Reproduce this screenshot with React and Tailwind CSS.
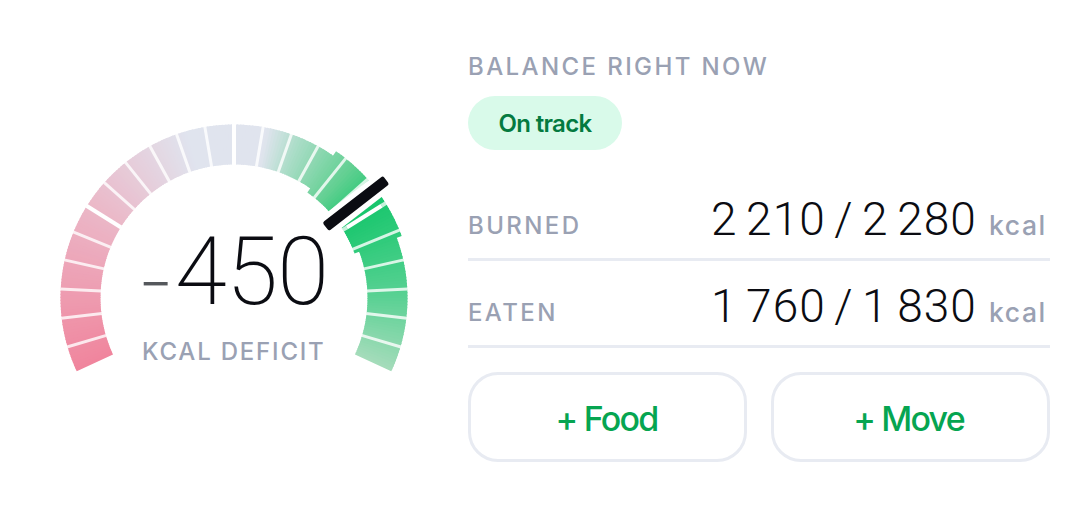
const C = 174;
const pt = (r, deg) => {
  const a = (deg * Math.PI) / 180;
  return [C + r * Math.sin(a), C - r * Math.cos(a)];
};
const band = (r0, r1, a0, a1) => {
  const [x0, y0] = pt(r1, a0);
  const [x1, y1] = pt(r1, a1);
  const [x2, y2] = pt(r0, a1);
  const [x3, y3] = pt(r0, a0);
  const l = a1 - a0 > 180 ? 1 : 0;
  return `M${x0} ${y0}A${r1} ${r1} 0 ${l} 1 ${x1} ${y1}L${x2} ${y2}A${r0} ${r0} 0 ${l} 0 ${x3} ${y3}Z`;
};
const STOPS = [
  [-115, [240, 133, 157]],
  [-57, [235, 184, 200]],
  [-16, [224, 228, 238]],
  [11, [224, 228, 238]],
  [22, [172, 221, 200]],
  [42, [98, 208, 146]],
  [56, [25, 198, 109]],
  [66, [43, 202, 120]],
  [90, [90, 209, 148]],
  [115, [166, 220, 187]],
];
const colorAt = (a) => {
  let i = 0;
  while (i < STOPS.length - 2 && a > STOPS[i + 1][0]) i++;
  const [a0, c0] = STOPS[i];
  const [a1, c1] = STOPS[i + 1];
  const t = Math.min(1, Math.max(0, (a - a0) / (a1 - a0)));
  return `rgb(${c0.map((v, k) => Math.round(v + (c1[k] - v) * t)).join(",")})`;
};
const slices = (r0, r1, from, to) => {
  const n = Math.round(to - from);
  const step = (to - from) / n;
  return Array.from({ length: n }, (_, i) => {
    const a = from + i * step;
    return <path key={a} d={band(r0, r1, a, Math.min(to, a + step + 0.4))} fill={colorAt(a + step / 2)} />;
  });
};

function Tick({ angle, from, to, opacity, width }) {
  const [x1, y1] = pt(from, angle);
  const [x2, y2] = pt(to, angle);
  return <line x1={x1} y1={y1} x2={x2} y2={y2} stroke="#fff" strokeOpacity={opacity} strokeWidth={width} />;
}

function Gauge() {
  return (
    <svg className="block h-[348px] w-[348px] overflow-visible" viewBox="0 0 348 348">
      {slices(133.5, 173.5, -115, 115)}
      {slices(128.5, 178.8, 34.8, 69.7)}
      {Array.from({ length: 23 }, (_, i) => {
        const a = (i - 11) * 9.667;
        const major = (i + 1) % 6 === 0;
        const zone = a > 34.8 && a < 69.7;
        return (
          <g key={i}>
            <Tick angle={a} from={zone && !major ? 128 : 133} to={zone && !major ? 179.5 : 174} opacity={major ? 1 : 0.8} width={major ? 4 : 3} />
            {zone && major && <Tick angle={a} from={128} to={133} opacity={0.75} width={4} />}
            {zone && major && <Tick angle={a} from={174} to={179.5} opacity={0.75} width={4} />}
          </g>
        );
      })}
      <g transform={`rotate(52.2 ${C} ${C})`}>
        <rect x={C - 10.6} y={C - 197} width="21.2" height="85" fill="#fff" />
        <rect x={C - 5.3} y={C - 192.5} width="10.6" height="76.5" rx="2.2" fill="#0b0c12" />
      </g>
    </svg>
  );
}

const label = "text-[#9aa1b3] text-[24px] leading-[30px] whitespace-nowrap";

function Row({ name, value }) {
  return (
    <div className="flex h-[87px] items-end justify-between border-b-[3px] border-[#e8ebf2] pb-[15px]">
      <span className={`${label} mb-[2px] font-[450] tracking-[2.4px]`}>{name}</span>
      <span className="flex items-baseline">
        <span className="pr-[12px] font-['Roboto',sans-serif] text-[46px] leading-[48px] font-light tracking-[1.1px] whitespace-nowrap text-[#0b0c12] [word-spacing:-3.9px]">{value}</span>
        <span className="w-[61px] text-[26.5px] leading-[30px] font-medium tracking-[1.6px] text-[#9aa1b3]">kcal</span>
      </span>
    </div>
  );
}

export default function App() {
  return (
    <div className="flex h-[510px] w-[1092px] overflow-hidden bg-white font-['Inter',sans-serif]">
      <div className="grid w-[468px] pt-[123.5px] pl-[60px]">
        <div className="col-start-1 row-start-1">
          <Gauge />
        </div>
        <div className="z-10 col-start-1 row-start-1 flex flex-col pt-[98px] pl-[81px]">
          <div className="flex h-[100px] items-center whitespace-nowrap text-[#0b0c12]">
            <span className="mt-[17px] w-[34px] -translate-x-[3px] text-[54px] leading-[50px] font-light text-[#55585c]">−</span>
            <span className="font-['Roboto',sans-serif] text-[94px] leading-[100px] font-extralight tracking-[-0.6px]">450</span>
          </div>
          <div className={`${label} mt-[15px] pl-px font-[450] tracking-[1.8px]`}>KCAL DEFICIT</div>
        </div>
      </div>
      <main className="flex w-[582px] flex-col pt-[52px]">
        <div className={`${label} font-[450] tracking-[2.4px]`}>BALANCE RIGHT NOW</div>
        <div className="mt-[14px] flex h-[54px] w-[154px] items-center justify-center rounded-full bg-[#d9faea] pt-[2px] text-[24px] font-semibold tracking-[-0.7px] text-[#047a40]">On track</div>
        <div className="mt-[24px] flex flex-col">
          <Row name="BURNED" value="2 210 / 2 280" />
          <Row name="EATEN" value="1 760 / 1 830" />
        </div>
        <div className="mt-[24px] grid grid-cols-2 gap-[24px]">
          <button className="h-[90px] rounded-[30px] border-[3px] border-[#e8ebf2] pt-[2px] pr-[2px] text-[34px] font-medium tracking-[-1.8px] text-[#06a551]">+ Food</button>
          <button className="h-[90px] rounded-[30px] border-[3px] border-[#e8ebf2] pt-[2px] pr-[4px] text-[34px] font-medium tracking-[-1.8px] text-[#06a551]">+ Move</button>
        </div>
      </main>
    </div>
  );
}
